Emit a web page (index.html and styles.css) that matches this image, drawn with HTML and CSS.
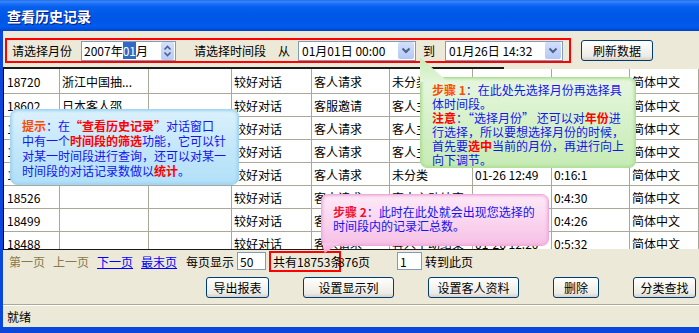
FILE: index.html
```html
<!DOCTYPE html>
<html lang="zh-CN">
<head>
<meta charset="utf-8">
<title>查看历史记录</title>
<link rel="stylesheet" href="styles.css">
</head>
<body>
<div class="window">
  <div class="titlebar">查看历史记录</div>
  <div class="frame">
    <div class="filter">
      <div class="redbox">
        <span class="lbl">请选择月份</span>
        <div class="spinbox">
          <span class="val">2007年<span class="sel">01</span>月</span>
          <span class="spinbtn"><svg width="13" height="18" viewBox="0 0 13 18"><path d="M3.5 7.5 L6.5 4.5 L9.5 7.5" fill="none" stroke="#4d6185" stroke-width="1.6"/><path d="M3.5 10.5 L6.5 13.5 L9.5 10.5" fill="none" stroke="#4d6185" stroke-width="1.6"/></svg></span>
        </div>
        <span class="lbl lbl-period">请选择时间段</span>
        <span class="lbl lbl-from">从</span>
        <div class="combo combo-from">
          <span class="val">01月01日&nbsp;00:00</span>
          <span class="ddbtn"><svg width="16" height="17" viewBox="0 0 16 17"><path d="M4.5 6.5 L8 10 L11.5 6.5" fill="none" stroke="#4d6185" stroke-width="2"/></svg></span>
        </div>
        <span class="lbl lbl-to">到</span>
        <div class="combo combo-to">
          <span class="val">01月26日&nbsp;14:32</span>
          <span class="ddbtn"><svg width="16" height="17" viewBox="0 0 16 17"><path d="M4.5 6.5 L8 10 L11.5 6.5" fill="none" stroke="#4d6185" stroke-width="2"/></svg></span>
        </div>
      </div>
      <button class="btn btn-refresh">刷新数据</button>
    </div>

    <div class="list">
      <div class="rows">
        <div class="row row-first"><span class="c">18720</span><span class="c">浙江中国抽...</span><span class="c"></span><span class="c">较好对话</span><span class="c">客人请求</span><span class="c">未分类</span><span class="c">01-26 14:21</span><span class="c">0:8:12</span><span class="c">简体中文</span></div>
        <div class="row"><span class="c">18602</span><span class="c">日本客人邵...</span><span class="c"></span><span class="c">较好对话</span><span class="c">客服邀请</span><span class="c">客人主动结束</span><span class="c">01-26 13:55</span><span class="c">0:12:40</span><span class="c">简体中文</span></div>
        <div class="row"><span class="c">18587</span><span class="c"></span><span class="c"></span><span class="c">较好对话</span><span class="c">客人请求</span><span class="c">客人主动结束</span><span class="c">01-26 13:30</span><span class="c">0:6:18</span><span class="c">简体中文</span></div>
        <div class="row"><span class="c">18560</span><span class="c"></span><span class="c"></span><span class="c">较好对话</span><span class="c">客人请求</span><span class="c">客人主动结束</span><span class="c">01-26 13:02</span><span class="c">0:3:45</span><span class="c">简体中文</span></div>
        <div class="row"><span class="c">18541</span><span class="c"></span><span class="c"></span><span class="c">较好对话</span><span class="c">客人请求</span><span class="c">未分类</span><span class="c">01-26 12:49</span><span class="c">0:16:1</span><span class="c">简体中文</span></div>
        <div class="row"><span class="c">18526</span><span class="c"></span><span class="c"></span><span class="c">较好对话</span><span class="c">客人请求</span><span class="c">客人主动结束</span><span class="c">01-26 12:59</span><span class="c">0:4:30</span><span class="c">简体中文</span></div>
        <div class="row"><span class="c">18499</span><span class="c"></span><span class="c"></span><span class="c">较好对话</span><span class="c">客人请求</span><span class="c">客人主动结束</span><span class="c">01-26 12:31</span><span class="c">0:4:26</span><span class="c">简体中文</span></div>
        <div class="row"><span class="c">18488</span><span class="c"></span><span class="c"></span><span class="c">较好对话</span><span class="c">客人请求</span><span class="c">客人主动结束</span><span class="c">01-26 12:20</span><span class="c">0:5:32</span><span class="c">简体中文</span></div>
      </div>
    </div>

    <div class="pager">
      <span class="dis">第一页</span>
      <span class="dis gap8">上一页</span>
      <a class="lnk gap8" href="#">下一页</a>
      <a class="lnk gap8" href="#">最末页</a>
      <span class="gap9">每页显示</span>
      <span class="tinput t50">50</span>
      <span class="total">共有18753条</span><span class="pages">876页</span>
      <span class="tinput t1">1</span>
      <span class="goto">转到此页</span>
    </div>

    <div class="actions">
      <button class="btn w63">导出报表</button>
      <button class="btn w91">设置显示列</button>
      <button class="btn w91">设置客人资料</button>
      <button class="btn w46">删除</button>
      <button class="btn w63">分类查找</button>
    </div>

    <div class="status">就绪</div>
  </div>

  <div class="callout tip"><b class="or">提示</b>：在<b class="rd">“查看历史记录”</b>对话窗口<br>中有一个<b class="rd">时间段的筛选</b>功能，它可以针<br>对某一时间段进行查询，还可以对某一<br>时间段的对话记录数做以<b class="rd">统计</b>。</div>

  <div class="tail tail-green"></div>
  <div class="callout step1"><b class="or">步骤 1</b>：在此处先选择月份再选择具<br>体时间段。<br><b class="rd">注意</b>：“选择月份” 还可以对<b class="rd">年份</b>进<br>行选择，所以要想选择月份的时候，<br>首先要<b class="rd">选中</b>当前的月份，再进行向上<br>向下调节。</div>

  <div class="tail tail-pink"></div>
  <div class="callout step2"><b class="rd2">步骤 2</b>：此时在此处就会出现您选择的<br>时间段内的记录汇总数。</div>
</div>
</body>
</html>
```

FILE: styles.css
```css
html, body {
  margin: 0;
  padding: 0;
}
body {
  width: 699px;
  height: 333px;
  overflow: hidden;
  font-family: "Noto Sans CJK SC", "Liberation Sans", sans-serif;
  font-size: 12px;
  color: #000;
}
.window {
  position: relative;
  width: 699px;
  height: 333px;
  background: #ece9d8;
  overflow: hidden;
}
.titlebar {
  height: 31px;
  box-sizing: border-box;
  padding-left: 7px;
  display: flex;
  align-items: center;
  color: #fff;
  font-weight: bold;
  font-size: 14px;
  text-shadow: 1px 1px #0a1a7a;
  background: linear-gradient(to bottom, #1f6ef0 0%, #3a86f8 6%, #1b6ff5 12%, #0560ee 22%, #0058e8 45%, #0057e6 70%, #005cef 85%, #0050da 94%, #0042c0 100%);
}
.frame {
  height: 302px;
  box-sizing: border-box;
  border-left: 3px solid #0a47dc;
  border-bottom: 6px solid #0a47dc;
  display: flex;
  flex-direction: column;
}

/* ---------- filter row ---------- */
.filter {
  display: flex;
  align-items: center;
  margin: 7px 0 0 2px;
  height: 25px;
}
.redbox {
  box-sizing: border-box;
  width: 566px;
  height: 25px;
  border: 2px solid #ff0000;
  padding-left: 5px;
  display: flex;
  align-items: center;
}
.lbl { white-space: nowrap; }
.lbl-period { margin-left: 18px; }
.lbl-from { margin-left: 12px; }
.lbl-to { margin-left: 7px; }
.spinbox {
  box-sizing: border-box;
  margin-left: 9px;
  width: 95px;
  height: 20px;
  border: 1px solid #7f9db9;
  background: #fff;
  display: flex;
  align-items: center;
  padding-left: 2px;
}
.sel {
  background: #316ac5;
  color: #fff;
}
.spinbtn {
  margin-left: auto;
  margin-right: 1px;
  width: 13px;
  height: 18px;
  border-radius: 2px;
  background: linear-gradient(#d3e0fd, #b7cbf6);
  display: flex;
}
.combo {
  box-sizing: border-box;
  width: 118px;
  height: 20px;
  border: 1px solid #7f9db9;
  background: #fff;
  display: flex;
  align-items: center;
  padding-left: 3px;
}
.combo-from { margin-left: 8px; }
.combo-to { margin-left: 10px; }
.combo .val { white-space: nowrap; }
.ddbtn {
  margin-left: auto;
  margin-right: 1px;
  width: 16px;
  height: 17px;
  border-radius: 2px;
  background: linear-gradient(#d2e0fd, #b4c8f6);
  display: flex;
}
.btn {
  box-sizing: border-box;
  height: 21px;
  padding: 0;
  border: 1px solid #003c74;
  border-radius: 3px;
  background: linear-gradient(#ffffff 0%, #f6f5f1 40%, #ecebe6 80%, #d8d2c6 100%);
  font-family: "Noto Sans CJK SC", "Liberation Sans", sans-serif;
  font-size: 12px;
  color: #000;
  display: flex;
  align-items: center;
  justify-content: center;
  white-space: nowrap;
}
.btn-refresh {
  margin-left: 10px;
  width: 72px;
}

/* ---------- list ---------- */
.list {
  margin-top: 4px;
  height: 183px;
  box-sizing: border-box;
  padding: 2px 0 1px 0;
  border-left: 1px solid #000;
  background:
    linear-gradient(#1a1a1a, #1a1a1a) 0 0 / 500px 2px no-repeat,
    linear-gradient(#ece9d8, #ece9d8) 0 0 / 100% 2px no-repeat,
    linear-gradient(#1a1a1a, #1a1a1a) 0 100% / 500px 1px no-repeat,
    linear-gradient(#ece9d8, #ece9d8) 0 100% / 100% 1px no-repeat,
    #fff;
}
.rows {
  height: 180px;
  overflow: hidden;
  background: #fff;
}
.row {
  display: grid;
  grid-template-columns: 56px 89px 83px 80px 78px 83px 79px 78px 1fr;
  height: 23px;
  box-sizing: border-box;
  border-bottom: 1px solid #aca899;
}
.row-first { height: 25px; }
.c {
  box-sizing: border-box;
  border-right: 1px solid #aca899;
  padding-left: 2px;
  white-space: nowrap;
  overflow: hidden;
  display: flex;
  align-items: center;
}
.c:first-child { padding-left: 3px; }

/* ---------- pager ---------- */
.pager {
  height: 22px;
  display: flex;
  align-items: center;
  padding-left: 6px;
  white-space: nowrap;
}
.dis { color: #857a4e; }
.gap8 { margin-left: 8px; }
.gap9 { margin-left: 9px; }
.lnk {
  color: #0000ff;
  text-decoration: underline;
}
.tinput {
  box-sizing: border-box;
  height: 18px;
  border: 1px solid #7f9db9;
  background: #fff;
  padding-left: 2px;
  display: flex;
  align-items: center;
}
.t50 { margin-left: 3px; width: 29px; }
.t1 { margin-left: 27px; width: 25px; }
.total {
  position: relative;
  z-index: 1;
  box-sizing: border-box;
  margin-left: 3px;
  width: 72px;
  height: 21px;
  border: 2px solid #ff0000;
  padding-left: 2px;
  display: flex;
  align-items: center;
}
.pages { margin-left: -3px; }
.goto { margin-left: 3px; }

/* ---------- actions ---------- */
.actions {
  margin-top: 5px;
  padding-left: 203px;
  display: flex;
  gap: 34px;
}
.w63 { width: 63px; }
.w91 { width: 91px; }
.w46 { width: 46px; }

/* ---------- status ---------- */
.status {
  margin-top: 6px;
  flex: 1;
  border-top: 1px solid #aca899;
  box-shadow: inset 0 1px #ffffff;
  padding-left: 4px;
  display: flex;
  align-items: center;
}

/* ---------- callouts ---------- */
.callout {
  position: absolute;
  box-sizing: border-box;
  color: #1414f0;
  font-size: 12px;
  white-space: nowrap;
  z-index: 3;
}
.callout b { font-weight: bold; }
.or { color: #ff4a00; }
.rd { color: #ff0000; }
.rd2 { color: #f01030; }

.tip {
  left: 10px;
  top: 109px;
  width: 229px;
  height: 76px;
  padding: 8px 0 0 11px;
  line-height: 15px;
  border: 1px solid #a4d6f2;
  border-radius: 7px;
  background: linear-gradient(#dcf1fc 0%, #c6e8fa 45%, #b2e0f8 100%);
  box-shadow: inset 0 0 3px 1px #9ad3f3;
}
.step1 {
  left: 420px;
  top: 77px;
  width: 216px;
  height: 91px;
  padding: 5px 0 0 11px;
  line-height: 14px;
  border: 1px solid #b0e09a;
  border-radius: 7px;
  background: linear-gradient(#e6f6de 0%, #d6f1c9 50%, #c6ebb4 100%);
  box-shadow: inset 0 0 3px 1px #acdf95;
}
.step2 {
  left: 321px;
  top: 194px;
  width: 228px;
  height: 52px;
  padding: 10px 0 0 11px;
  line-height: 14px;
  border: 1px solid #f0acd9;
  border-radius: 7px;
  background: linear-gradient(#fdeaf7 0%, #fad6ef 50%, #f6c0e6 100%);
  box-shadow: inset 0 0 3px 1px #f2aede;
}
.tail {
  position: absolute;
  z-index: 4;
}
.tail-green {
  left: 420px;
  top: 57px;
  width: 28px;
  height: 25px;
  background: linear-gradient(#c9ecb8, #e2f5d9);
  clip-path: polygon(0 0, 0 100%, 100% 100%);
}
.tail-pink {
  left: 322px;
  top: 243px;
  width: 18px;
  height: 10px;
  background: linear-gradient(#f8c8e9, #f3acdc);
  clip-path: polygon(0 0, 100% 0, 15% 100%);
}
```
